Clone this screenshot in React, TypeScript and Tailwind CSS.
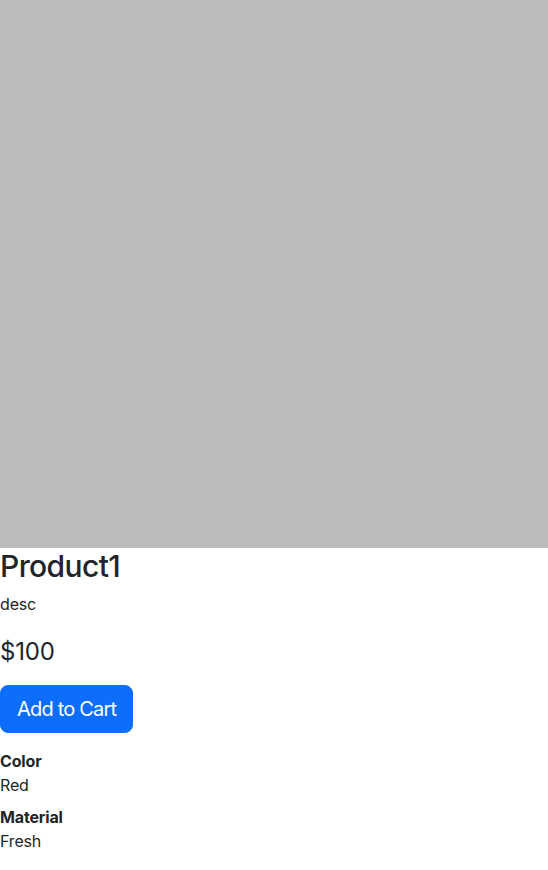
export default function App() {
  const specs = [
    { label: "Color", value: "Red" },
    { label: "Material", value: "Fresh" },
  ];

  return (
    <div className="w-full text-[#212529] font-['Inter',sans-serif] text-base leading-6 tracking-[-0.01em]">
      <div className="w-full aspect-square bg-[#bbbbbb]" />
      <div className="flex flex-col items-start">
        <h1 className="text-[30px] leading-[36px] font-medium tracking-[-0.02em] mb-2">Product1</h1>
        <p className="mb-[21px]">desc</p>
        <h3 className="text-[24px] leading-[29px] font-normal mb-[19px]">$100</h3>
        <button className="bg-[#0d6efd] text-white text-[20px] leading-[30px] tracking-[-0.04em] px-4 py-2 rounded-lg border border-[#0d6efd] mb-4">
          Add to Cart
        </button>
        {specs.map((s) => (
          <div key={s.label} className="mb-2">
            <div className="font-bold">{s.label}</div>
            <div>{s.value}</div>
          </div>
        ))}
      </div>
    </div>
  );
}
